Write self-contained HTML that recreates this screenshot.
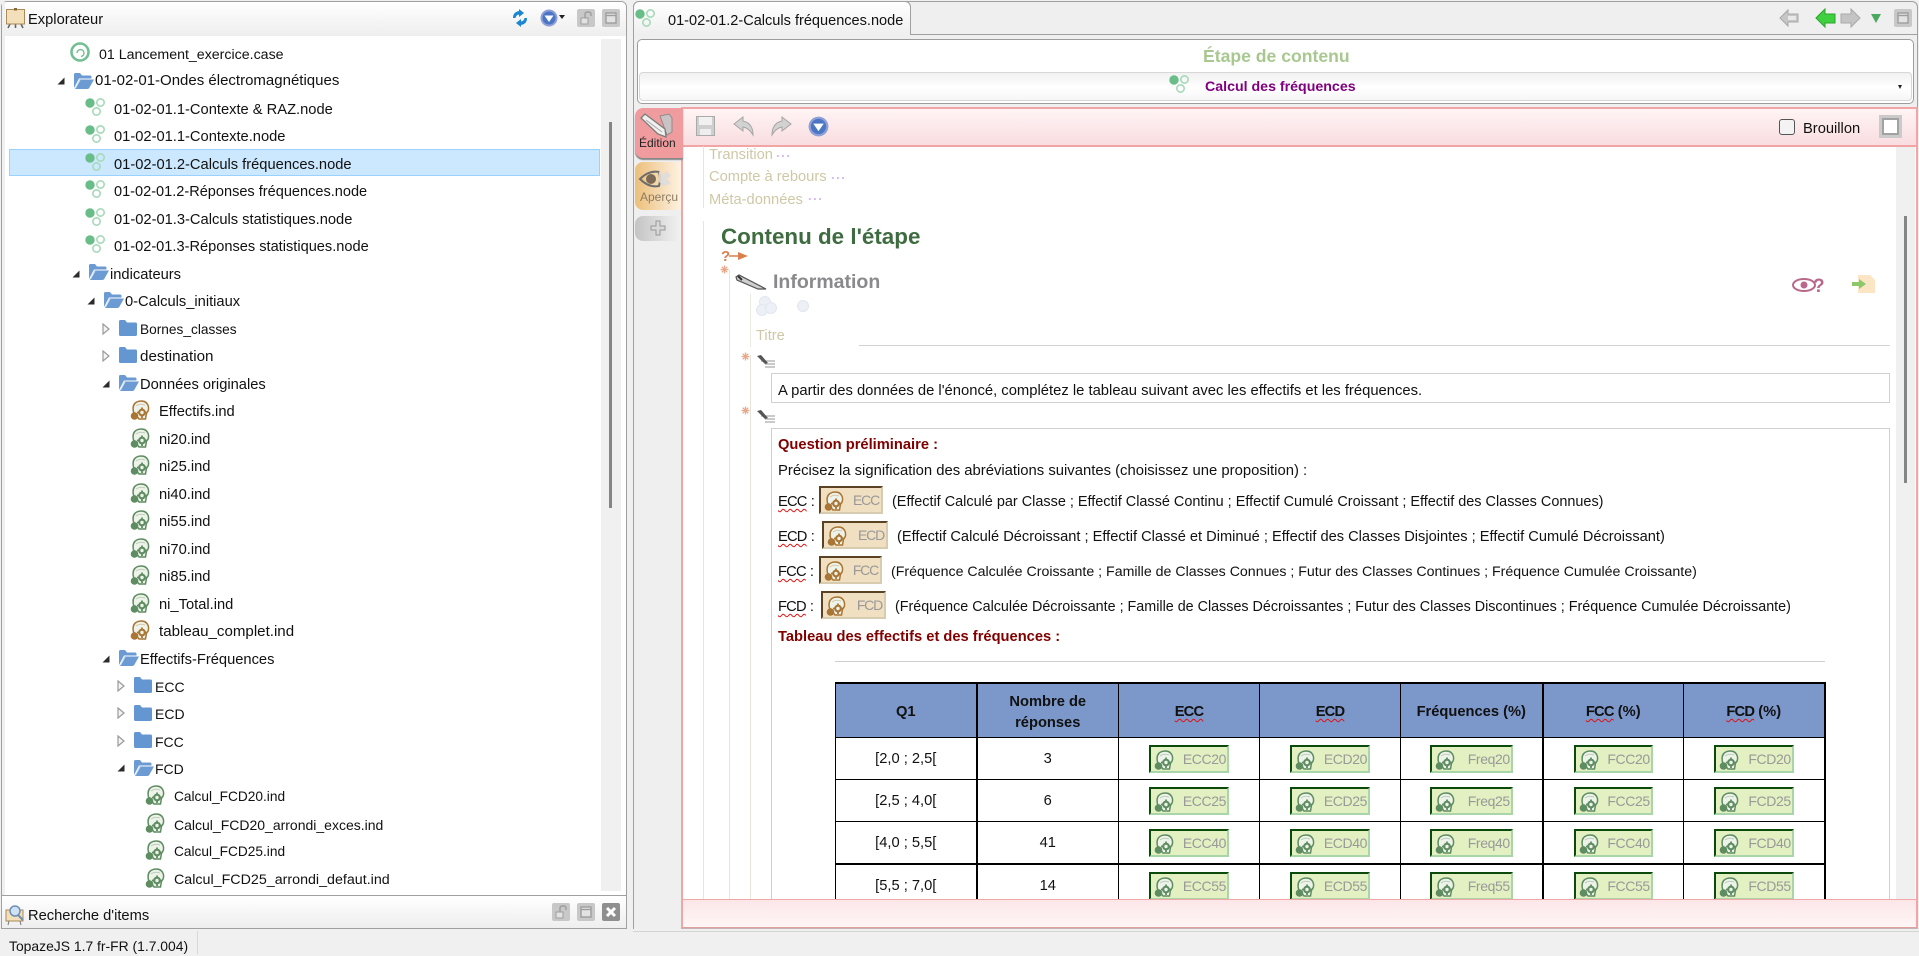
<!DOCTYPE html>
<html lang="fr"><head><meta charset="utf-8"><title>TopazeJS</title>
<style>
html,body{margin:0;padding:0;width:1919px;height:954px;overflow:hidden;background:#f0f0f0;font-family:"Liberation Sans",sans-serif;font-size:14.7px;color:#111}
div,span,svg{box-sizing:border-box}
.a{position:absolute}
.t{position:absolute;white-space:nowrap;line-height:20px;height:20px;margin-top:1px}
svg.i{position:absolute;overflow:visible}
.g{color:#cfc8a6}
.dt{font-size:13px;letter-spacing:1.5px;color:#d4b8f0;font-weight:bold}
.w{text-decoration:underline wavy #e01010 1px;text-underline-offset:2px;letter-spacing:-.8px}
.q{position:absolute;height:28px;background:#f0dfc0;border-style:solid;border-width:2px;border-color:#5a4222 #d8ccb0 #d8ccb0 #5a4222;color:#999;line-height:24px;text-align:right;padding-right:2px;font-size:14px;letter-spacing:-1.2px}
.q svg{position:absolute;left:3px;top:2px;color:#a97635}
table{position:absolute;left:835px;top:682px;border-collapse:collapse;table-layout:fixed;width:989px}
th,td{padding:0;text-align:center;border:1px solid #000;font-size:14.7px;color:#111;position:relative}
th{background:#7c97c9;height:49px;font-weight:bold;line-height:21px;border-top:2px solid #000;padding-top:4px}
td{height:41px}
.k{border-right:2px solid #000}
.v{display:inline-block;position:relative;height:28px;background:#e2f0c2;border-style:solid;border-width:2px;border-color:#0b4a0b #a9d6a9 #a9d6a9 #0b4a0b;color:#999;line-height:24px;text-align:right;padding-right:1px;vertical-align:middle;top:0;font-size:14px;letter-spacing:-.4px}
.v svg{position:absolute;left:3px;top:2px;color:#5f8d62}
</style></head><body>
<svg width="0" height="0" style="position:absolute">
<defs>
<symbol id="n" viewBox="0 0 22 22"><circle cx="6" cy="7" r="4.700" fill="#68bd88"/><circle cx="16.500" cy="6.500" r="3.700" fill="none" stroke="#a6dab8" stroke-width="1.600"/><circle cx="12.500" cy="15.500" r="3.700" fill="none" stroke="#a6dab8" stroke-width="1.600"/></symbol>
<symbol id="o" viewBox="0 0 21 18"><path d="M1 16V2.500Q1 1 2.500 1H7l2 2.500h8q1.500 0 1.500 1.500V6.500H6L1 16z" fill="#6b9bd2"/><path d="M2 17L6.500 7.500H21L16.500 15.500Q16 17 14 17z" fill="#6b9bd2"/><path d="M2.500 16L7 8" stroke="#cfe0f3" stroke-width="1"/></symbol>
<symbol id="c" viewBox="0 0 20 18"><path d="M1 15.500V2.500Q1 1 2.500 1H7l2 2.500h8.500Q19 3.500 19 5v10.500Q19 17 17.500 17h-15Q1 17 1 15.500z" fill="#6497d2"/></symbol>
<symbol id="h" viewBox="0 0 20 20"><path d="M3.500 12Q1.500 3 9 1.200Q17 0 18.500 7Q19 11 16.500 13L15.500 19H9z" fill="#eef3ea" stroke="currentColor" stroke-width="1.500"/><path d="M6 6q4-3 9-1" fill="none" stroke="currentColor" stroke-width="1" opacity=".35"/><circle cx="12" cy="12.500" r="2.800" fill="#eef3ea" stroke="currentColor" stroke-width="2.200"/><path d="M12 7.500v2M12 15.500v2.500M7 12.500h2M15 12.500h2.500" stroke="currentColor" stroke-width="1.800"/><circle cx="4.500" cy="16" r="3.800" fill="currentColor"/></symbol>
<symbol id="e" viewBox="0 0 8 8"><path d="M7.500 0.500V7.500H0.500z" fill="#2b2b2b"/></symbol>
<symbol id="x" viewBox="0 0 8 12"><path d="M1 1L7 6L1 11z" fill="#f4f4f4" stroke="#9a9a9a" stroke-width="1.200"/></symbol>
<symbol id="s" viewBox="0 0 18 18"><circle cx="9" cy="9" r="8.500" fill="#8e9fd6"/><circle cx="9" cy="9" r="6.500" fill="#4a76c4"/><path d="M4.500 6.500h9L9 13z" fill="#fff"/></symbol>
<symbol id="b" viewBox="0 0 18 18"><rect width="18" height="18" rx="2" fill="#c8c8c8"/><rect x="4" y="4" width="10" height="10" fill="#e2e2e2" stroke="#9e9e9e" stroke-width="1.400"/><path d="M4 6.500h10" stroke="#9e9e9e" stroke-width="1.400"/></symbol>
<symbol id="l" viewBox="0 0 18 18"><rect width="18" height="18" rx="2" fill="#c8c8c8"/><rect x="4" y="9" width="7" height="6" fill="#e2e2e2" stroke="#9e9e9e"/><path d="M8 9V5Q8 3 11 3Q14 3 14 5V7" fill="none" stroke="#9e9e9e" stroke-width="1.400"/></symbol>
<symbol id="m" viewBox="0 0 18 13"><path d="M4 6h14M8 9h10M8 12h10" stroke="#aaa" stroke-width="1.200"/><path d="M0 1L4 0L11 8L8 9z" fill="#555"/></symbol>
<symbol id="r" viewBox="0 0 9 9"><path d="M4.500 0.500V8.500M0.500 4.500H8.500M1.700 1.700L7.300 7.300M7.300 1.700L1.700 7.300" stroke="#e8a98a" stroke-width="1.300"/></symbol>
</defs></svg>

<!-- left panel -->
<div class="a" style="left:1px;top:1px;width:626px;height:928px;border:1px solid #a0a0a0;border-radius:6px 6px 0 0;background:#fff"></div>
<div class="a" style="left:2px;top:2px;width:624px;height:34px;background:linear-gradient(#fff,#eee);border-radius:5px 5px 0 0"></div>
<div class="a" style="left:2px;top:2px;width:3px;height:926px;background:#f0f0f0"></div>
<svg class="i" style="left:6px;top:8px" width="19" height="20" viewBox="0 0 19 20"><path d="M4 16L2 20M15 16L17 20M9.500 16V20" stroke="#666" stroke-width="1.600"/><rect x="0.500" y="1.500" width="18" height="14.500" fill="#f3dfb9" stroke="#a98a58"/><rect x="8" y="0" width="3" height="2.500" fill="#8a6a3a"/></svg>
<div class="t" style="left:28px;top:10px;margin-top:0">Explorateur</div>
<svg class="i" style="left:511px;top:9px" width="18" height="18" viewBox="0 0 18 18"><path d="M2 9Q2 3 8 2V0L13 4L8 8V5.500Q5 6 4.500 9z" fill="#1b86d4"/><path d="M16 9Q16 15 10 16V18L5 14L10 10V12.500Q13 12 13.500 9z" fill="#1b86d4"/></svg>
<svg class="i" style="left:540px;top:9px" width="18" height="18"><use href="#s"/></svg>
<div class="a" style="left:559px;top:15px;width:0;height:0;border:3.500px solid transparent;border-top:4px solid #222"></div>
<svg class="i" style="left:577px;top:9px" width="18" height="18"><use href="#l"/></svg>
<svg class="i" style="left:602px;top:9px" width="18" height="18"><use href="#b"/></svg>

<div class="a" style="left:601px;top:39px;width:20px;height:852px;background:#f0f0f0"></div>
<div class="a" style="left:609px;top:122px;width:3px;height:386px;background:#858585"></div>
<div class="a" style="left:9px;top:149px;width:591px;height:27px;background:#cce8ff;border:1px solid #99d1ff"></div>

<!-- tree -->
<div class="a" style="left:0;top:36px;width:600px;height:857px;overflow:hidden">
<div class="a" style="left:0;top:-36px;width:600px;height:940px">
<svg class="i" style="left:70px;top:42px" width="20" height="20" viewBox="0 0 20 20"><circle cx="10" cy="10" r="8.500" fill="none" stroke="#72bf92" stroke-width="2.600"/><path d="M7 11a3.500 3.500 0 1 1 4 3.500" fill="none" stroke="#72bf92" stroke-width="1.400"/></svg>
<div class="t" style="left:99px;top:44px;font-size:14.2px">01 Lancement_exercice.case</div>

<svg class="i" style="left:57px;top:77px" width="8" height="8"><use href="#e"/></svg>
<svg class="i" style="left:73px;top:72px" width="21" height="18"><use href="#o"/></svg>
<div class="t" style="left:95px;top:71px;font-size:15px;margin-top:0">01-02-01-Ondes électromagnétiques</div>

<svg class="i" style="left:84px;top:96px" width="22" height="22"><use href="#n"/></svg><div class="t" style="left:114px;top:99px">01-02-01.1-Contexte &amp; RAZ.node</div>
<svg class="i" style="left:84px;top:123px" width="22" height="22"><use href="#n"/></svg><div class="t" style="left:114px;top:126px">01-02-01.1-Contexte.node</div>
<svg class="i" style="left:84px;top:151px" width="22" height="22"><use href="#n"/></svg><div class="t" style="left:114px;top:154px">01-02-01.2-Calculs fréquences.node</div>
<svg class="i" style="left:84px;top:178px" width="22" height="22"><use href="#n"/></svg><div class="t" style="left:114px;top:181px;font-size:14.55px">01-02-01.2-Réponses fréquences.node</div>
<svg class="i" style="left:84px;top:206px" width="22" height="22"><use href="#n"/></svg><div class="t" style="left:114px;top:209px">01-02-01.3-Calculs statistiques.node</div>
<svg class="i" style="left:84px;top:233px" width="22" height="22"><use href="#n"/></svg><div class="t" style="left:114px;top:236px;font-size:14.6px">01-02-01.3-Réponses statistiques.node</div>

<svg class="i" style="left:72px;top:270px" width="8" height="8"><use href="#e"/></svg>
<svg class="i" style="left:88px;top:263px" width="21" height="18"><use href="#o"/></svg>
<div class="t" style="left:110px;top:264px">indicateurs</div>
<svg class="i" style="left:87px;top:297px" width="8" height="8"><use href="#e"/></svg>
<svg class="i" style="left:103px;top:291px" width="21" height="18"><use href="#o"/></svg>
<div class="t" style="left:125px;top:291px">0-Calculs_initiaux</div>

<svg class="i" style="left:102px;top:323px" width="8" height="12"><use href="#x"/></svg>
<svg class="i" style="left:118px;top:319px" width="20" height="18"><use href="#c"/></svg>
<div class="t" style="left:140px;top:319px;font-size:13.7px">Bornes_classes</div>
<svg class="i" style="left:102px;top:350px" width="8" height="12"><use href="#x"/></svg>
<svg class="i" style="left:118px;top:346px" width="20" height="18"><use href="#c"/></svg>
<div class="t" style="left:140px;top:346px;font-size:15.2px">destination</div>
<svg class="i" style="left:102px;top:380px" width="8" height="8"><use href="#e"/></svg>
<svg class="i" style="left:118px;top:374px" width="21" height="18"><use href="#o"/></svg>
<div class="t" style="left:140px;top:374px">Données originales</div>

<svg class="i" style="left:130px;top:400px;color:#a97635" width="20" height="20"><use href="#h"/></svg><div class="t" style="left:159px;top:401px">Effectifs.ind</div>
<svg class="i" style="left:130px;top:428px;color:#5f8d62" width="20" height="20"><use href="#h"/></svg><div class="t" style="left:159px;top:429px">ni20.ind</div>
<svg class="i" style="left:130px;top:455px;color:#5f8d62" width="20" height="20"><use href="#h"/></svg><div class="t" style="left:159px;top:456px">ni25.ind</div>
<svg class="i" style="left:130px;top:483px;color:#5f8d62" width="20" height="20"><use href="#h"/></svg><div class="t" style="left:159px;top:484px">ni40.ind</div>
<svg class="i" style="left:130px;top:510px;color:#5f8d62" width="20" height="20"><use href="#h"/></svg><div class="t" style="left:159px;top:511px">ni55.ind</div>
<svg class="i" style="left:130px;top:538px;color:#5f8d62" width="20" height="20"><use href="#h"/></svg><div class="t" style="left:159px;top:539px">ni70.ind</div>
<svg class="i" style="left:130px;top:565px;color:#5f8d62" width="20" height="20"><use href="#h"/></svg><div class="t" style="left:159px;top:566px">ni85.ind</div>
<svg class="i" style="left:130px;top:593px;color:#5f8d62" width="20" height="20"><use href="#h"/></svg><div class="t" style="left:159px;top:594px">ni_Total.ind</div>
<svg class="i" style="left:130px;top:620px;color:#a97635" width="20" height="20"><use href="#h"/></svg><div class="t" style="left:159px;top:621px;font-size:15.1px">tableau_complet.ind</div>

<svg class="i" style="left:102px;top:655px" width="8" height="8"><use href="#e"/></svg>
<svg class="i" style="left:118px;top:649px" width="21" height="18"><use href="#o"/></svg>
<div class="t" style="left:140px;top:649px">Effectifs-Fréquences</div>
<svg class="i" style="left:117px;top:680px" width="8" height="12"><use href="#x"/></svg>
<svg class="i" style="left:133px;top:676px" width="20" height="18"><use href="#c"/></svg>
<div class="t" style="left:155px;top:676px;font-size:14px">ECC</div>
<svg class="i" style="left:117px;top:707px" width="8" height="12"><use href="#x"/></svg>
<svg class="i" style="left:133px;top:704px" width="20" height="18"><use href="#c"/></svg>
<div class="t" style="left:155px;top:703px;font-size:14px">ECD</div>
<svg class="i" style="left:117px;top:735px" width="8" height="12"><use href="#x"/></svg>
<svg class="i" style="left:133px;top:731px" width="20" height="18"><use href="#c"/></svg>
<div class="t" style="left:155px;top:731px;font-size:14px">FCC</div>
<svg class="i" style="left:117px;top:764px" width="8" height="8"><use href="#e"/></svg>
<svg class="i" style="left:133px;top:759px" width="21" height="18"><use href="#o"/></svg>
<div class="t" style="left:155px;top:758px;font-size:14px">FCD</div>

<svg class="i" style="left:145px;top:785px;color:#5f8d62" width="20" height="20"><use href="#h"/></svg><div class="t" style="left:174px;top:786px;font-size:13.7px">Calcul_FCD20.ind</div>
<svg class="i" style="left:145px;top:813px;color:#5f8d62" width="20" height="20"><use href="#h"/></svg><div class="t" style="left:174px;top:814px;font-size:14px">Calcul_FCD20_arrondi_exces.ind</div>
<svg class="i" style="left:145px;top:840px;color:#5f8d62" width="20" height="20"><use href="#h"/></svg><div class="t" style="left:174px;top:841px;font-size:13.7px">Calcul_FCD25.ind</div>
<svg class="i" style="left:145px;top:868px;color:#5f8d62" width="20" height="20"><use href="#h"/></svg><div class="t" style="left:174px;top:869px;font-size:14.27px">Calcul_FCD25_arrondi_defaut.ind</div>
</div></div>

<!-- search -->
<div class="a" style="left:2px;top:895px;width:624px;height:33px;background:linear-gradient(#fff,#eee);border-top:1px solid #a0a0a0"></div>
<svg class="i" style="left:5px;top:905px" width="20" height="20" viewBox="0 0 20 20"><rect x="1" y="5" width="17" height="11" fill="#f3dfb9" stroke="#a98a58"/><circle cx="10" cy="6" r="5" fill="#cfe2f5" stroke="#6d8fb5" stroke-width="1.500"/><path d="M13 10L18 15" stroke="#6d8fb5" stroke-width="2"/><path d="M4 16l-1 4M15 16l1 4" stroke="#777"/></svg>
<div class="t" style="left:28px;top:905px">Recherche d'items</div>
<svg class="i" style="left:552px;top:903px" width="18" height="18"><use href="#l"/></svg>
<svg class="i" style="left:577px;top:903px" width="18" height="18"><use href="#b"/></svg>
<svg class="i" style="left:602px;top:903px" width="18" height="18" viewBox="0 0 18 18"><rect width="18" height="18" rx="2" fill="#8f8f8f"/><path d="M5 5L13 13M13 5L5 13" stroke="#fff" stroke-width="3"/></svg>

<!-- status -->
<div class="a" style="left:0;top:930px;width:1919px;height:24px;background:#f0f0f0"></div>
<div class="a" style="left:197px;top:931px;width:1px;height:23px;background:#d8d8d8"></div>
<div class="t" style="left:9px;top:936px;font-size:13.9px;margin-top:0">TopazeJS 1.7 fr-FR (1.7.004)</div>

<!-- right panel -->
<div class="a" style="left:633px;top:1px;width:1285px;height:928px;border:1px solid #a0a0a0;border-bottom:0;border-radius:6px 6px 0 0;background:#efefef"></div>
<div class="a" style="left:634px;top:34px;width:1283px;height:1px;background:#a0a0a0"></div>
<div class="a" style="left:633px;top:1px;width:278px;height:34px;border:1px solid #a0a0a0;border-bottom:0;border-radius:6px 6px 0 0;background:linear-gradient(#fff,#efefef)"></div>
<svg class="i" style="left:634px;top:7px" width="22" height="22"><use href="#n"/></svg>
<div class="t" style="left:668px;top:10px;font-size:14.55px">01-02-01.2-Calculs fréquences.node</div>

<svg class="i" style="left:1779px;top:8px" width="20" height="20" viewBox="0 0 20 20"><path d="M1 10L9 2V6H19V14H9V18z" fill="#c6c6c6" stroke="#a8a8a8"/><path d="M9 8h8v4H9z" fill="#e8e8e8"/></svg>
<svg class="i" style="left:1815px;top:8px" width="20" height="20" viewBox="0 0 20 20"><path d="M1 10L10 1V6H20V15H10V19z" fill="#3fd03f" stroke="#2aa52a"/></svg>
<svg class="i" style="left:1841px;top:8px" width="20" height="20" viewBox="0 0 20 20"><path d="M19 10L10 1V6H0V15H10V19z" fill="#c4c4c4" stroke="#aaa"/></svg>
<div class="a" style="left:1871px;top:14px;width:10px;height:9px;background:#4aa860;clip-path:polygon(0 0,100% 0,50% 100%)"></div>
<svg class="i" style="left:1894px;top:9px" width="18" height="18"><use href="#b"/></svg>

<div class="a" style="left:637px;top:39px;width:1277px;height:65px;border:1px solid #9c9c9c;border-radius:5px;background:#fff"></div>
<div class="t" style="left:1203px;top:46px;font-size:17.6px;font-weight:bold;color:#a8c890;margin-top:0">Étape de contenu</div>
<div class="a" style="left:639px;top:72px;width:1273px;height:29px;border:1px solid #d6d6d6;border-radius:4px;background:linear-gradient(#f1f1f1,#fff 55%,#f6f6f6)"></div>
<svg class="i" style="left:1168px;top:73px" width="22" height="22"><use href="#n"/></svg>
<div class="t" style="left:1205px;top:76px;font-weight:bold;font-size:14.2px;color:#800080">Calcul des fréquences</div>
<div class="a" style="left:1898px;top:85px;width:0;height:0;border:2.500px solid transparent;border-top:4px solid #222"></div>

<!-- editor -->
<div class="a" style="left:681px;top:107px;width:1237px;height:822px;border:2px solid #f2a5a5;border-bottom:0;background:#fff"></div>
<div class="a" style="left:683px;top:109px;width:1233px;height:38px;background:linear-gradient(#fff4f4,#f9dde0);border-bottom:2px solid #f2a5a5"></div>

<div class="a" style="left:635px;top:108px;width:48px;height:50px;background:#f09c9f;border-radius:8px 0 0 8px;box-shadow:0 2px 1px #888"></div>
<svg class="i" style="left:639px;top:112px" width="34" height="26" viewBox="0 0 34 26"><path d="M21 4l9-2 3 4v14l-5 3z" fill="#c9c3c3" stroke="#8f8a8a"/><path d="M2 6L6 2L26 17L27 25L19 22z" fill="#f2efef" stroke="#7d7d7d" stroke-width="1.300"/><path d="M7 8l16 12" stroke="#aaa"/></svg>
<div class="t" style="left:639px;top:132px;font-size:12px;color:#222">Édition</div>
<div class="a" style="left:635px;top:162px;width:46px;height:48px;background:linear-gradient(90deg,#ecbf7a,#fdf2e2);border-radius:8px 0 0 8px"></div>
<svg class="i" style="left:639px;top:168px" width="34" height="20" viewBox="0 0 34 20"><path d="M1 11Q10 2 20 4Q22 11 20 18Q10 20 1 11z" fill="none" stroke="#6d6d6d" stroke-width="2"/><circle cx="12" cy="11" r="5" fill="#7b6a55"/><path d="M20 3l4 4 4-4 4 5-4 3 4 5-8 2-4-4z" fill="#ddd" opacity=".9"/></svg>
<div class="t" style="left:640px;top:186px;font-size:12px;color:#8c7c64">Aperçu</div>
<div class="a" style="left:635px;top:216px;width:46px;height:25px;background:linear-gradient(90deg,#c4c4c4,#f2f2f2);border-radius:8px 0 0 8px"></div>
<svg class="i" style="left:650px;top:220px" width="16" height="16" viewBox="0 0 16 16"><path d="M6 1h4v5h5v4h-5v5H6v-5H1V6h5z" fill="#d8d8d8" stroke="#999"/></svg>

<svg class="i" style="left:696px;top:116px" width="19" height="20" viewBox="0 0 19 20"><rect x=".5" y=".5" width="18" height="19" fill="#cfcfcf" stroke="#aaa"/><rect x="3" y="1" width="13" height="8" fill="#f1f1f1"/><rect x="4" y="13" width="11" height="6" fill="#eee"/></svg>
<svg class="i" style="left:733px;top:116px" width="21" height="20" viewBox="0 0 21 20"><path d="M1 8L10 1V5Q20 7 20 19Q16 12 10 11V15z" fill="#d2d2d2" stroke="#a5a5a5"/></svg>
<svg class="i" style="left:771px;top:116px" width="21" height="20" viewBox="0 0 21 20"><path d="M20 8L11 1V5Q1 7 1 19Q5 12 11 11V15z" fill="#d2d2d2" stroke="#a5a5a5"/></svg>
<svg class="i" style="left:808px;top:116px" width="21" height="21"><use href="#s"/></svg>

<div class="a" style="left:1779px;top:119px;width:16px;height:16px;border:1px solid #555;border-radius:3px;background:#f3f3f3"></div>
<div class="t" style="left:1803px;top:118px">Brouillon</div>
<div class="a" style="left:1879px;top:115px;width:23px;height:23px;background:#cacaca;padding:3px"><div style="width:17px;height:17px;border:2px solid #a2a2a2;background:#fff"></div></div>

<div class="a" style="left:1896px;top:147px;width:19px;height:752px;background:#f0f0f0"></div>
<div class="a" style="left:1904px;top:216px;width:3px;height:267px;background:#858585"></div>

<!-- content -->
<div class="a" style="left:703px;top:146px;width:1px;height:62px;background:#e8e4da"></div>
<div class="a" style="left:703px;top:221px;width:1px;height:678px;background:#e8e4da"></div>
<div class="t g" style="left:709px;top:144px">Transition</div><div class="t dt" style="left:776px;top:142px">...</div>
<div class="t g" style="left:709px;top:166px">Compte à rebours</div><div class="t dt" style="left:831px;top:164px">...</div>
<div class="t g" style="left:709px;top:189px">Méta-données</div><div class="t dt" style="left:808px;top:185px">...</div>
<div class="t" style="left:721px;top:225px;font-size:22.4px;font-weight:bold;color:#3e6c40;line-height:24px;height:24px;margin-top:0">Contenu de l'étape</div>
<svg class="i" style="left:721px;top:249px" width="27" height="14" viewBox="0 0 27 14"><text x="0" y="12" font-size="15" font-weight="bold" fill="#d9814d" font-family="Liberation Sans">?</text><path d="M8 7H18" stroke="#d9814d" stroke-width="1.500"/><path d="M17 3L27 7L17 11z" fill="#d9814d"/></svg>

<svg class="i" style="left:720px;top:265px" width="9" height="9"><use href="#r"/></svg>
<div class="a" style="left:729px;top:270px;width:1px;height:629px;background:#e8e4da"></div>
<svg class="i" style="left:735px;top:274px" width="32" height="16" viewBox="0 0 32 16"><path d="M1 3L4 1L31 15L23 15L2 6z" fill="#cfcfcf" stroke="#555" stroke-width="1.200"/><path d="M3 2L7 6" stroke="#333" stroke-width="2"/></svg>
<div class="t" style="left:773px;top:270px;font-size:19.5px;font-weight:bold;color:#8a8a8c;line-height:24px;height:24px;margin-top:0">Information</div>
<svg class="i" style="left:1792px;top:276px" width="32" height="18" viewBox="0 0 32 18"><ellipse cx="12" cy="9" rx="11" ry="6" fill="none" stroke="#b9688a" stroke-width="2"/><circle cx="12" cy="9" r="3.500" fill="#b9688a"/><text x="21" y="16" font-size="19" font-weight="bold" fill="#b9688a" font-family="Liberation Sans">?</text></svg>
<svg class="i" style="left:1852px;top:275px" width="24" height="20" viewBox="0 0 24 20"><path d="M6 0H18L23 5V18H6z" fill="#fbe5c5"/><path d="M0 7H7V4L14 9L7 14V11H0z" fill="#8cc86a"/></svg>

<div class="a" style="left:750px;top:294px;width:1px;height:53px;background:#ece9e0"></div>
<div class="a" style="left:750px;top:355px;width:1px;height:544px;background:#e8e4da"></div>
<svg class="i" style="left:757px;top:296px" width="52" height="20" viewBox="0 0 52 20"><circle cx="8" cy="6" r="5.500" fill="#edf1f7" stroke="#e2e6ee"/><circle cx="5" cy="14" r="5.500" fill="#edf1f7" stroke="#e2e6ee"/><circle cx="14" cy="12" r="5.500" fill="#edf1f7" stroke="#e2e6ee"/><circle cx="46" cy="10" r="5.500" fill="#edf1f7" stroke="#e2e6ee"/></svg>
<div class="t g" style="left:756px;top:325px">Titre</div>
<div class="a" style="left:859px;top:345px;width:1031px;height:1px;background:#d2d2d2"></div>

<svg class="i" style="left:741px;top:352px" width="9" height="9"><use href="#r"/></svg>
<svg class="i" style="left:757px;top:355px" width="18" height="13"><use href="#m"/></svg>
<div class="a" style="left:771px;top:373px;width:1119px;height:30px;border:1px solid #d0d0d0"></div>
<div class="t" style="left:778px;top:380px;font-size:14.8px">A partir des données de l'énoncé, complétez le tableau suivant avec les effectifs et les fréquences.</div>
<svg class="i" style="left:741px;top:406px" width="9" height="9"><use href="#r"/></svg>
<svg class="i" style="left:757px;top:410px" width="18" height="13"><use href="#m"/></svg>
<div class="a" style="left:771px;top:428px;width:1119px;height:480px;border:1px solid #d0d0d0"></div>
<div class="t" style="left:778px;top:434px;font-weight:bold;color:#800000">Question préliminaire :</div>
<div class="t" style="left:778px;top:460px;font-size:14.84px">Précisez la signification des abréviations suivantes (choisissez une proposition) :</div>

<div class="t" style="left:778px;top:491px"><span class="w">ECC</span> :</div>
<div class="q" style="left:819px;top:486px;width:64px"><svg width="20" height="22"><use href="#h"/></svg>ECC</div>
<div class="t" style="left:892px;top:491px;font-size:14.45px">(Effectif Calculé par Classe ; Effectif Classé Continu ; Effectif Cumulé Croissant ; Effectif des Classes Connues)</div>

<div class="t" style="left:778px;top:526px"><span class="w">ECD</span> :</div>
<div class="q" style="left:822px;top:521px;width:66px"><svg width="20" height="22"><use href="#h"/></svg>ECD</div>
<div class="t" style="left:897px;top:526px;font-size:14.63px">(Effectif Calculé Décroissant ; Effectif Classé et Diminué ; Effectif des Classes Disjointes ; Effectif Cumulé Décroissant)</div>

<div class="t" style="left:778px;top:561px"><span class="w">FCC</span> :</div>
<div class="q" style="left:819px;top:556px;width:63px"><svg width="20" height="22"><use href="#h"/></svg>FCC</div>
<div class="t" style="left:891px;top:561px;font-size:14.18px">(Fréquence Calculée Croissante ; Famille de Classes Connues ; Futur des Classes Continues ; Fréquence Cumulée Croissante)</div>

<div class="t" style="left:778px;top:596px"><span class="w">FCD</span> :</div>
<div class="q" style="left:821px;top:591px;width:65px"><svg width="20" height="22"><use href="#h"/></svg>FCD</div>
<div class="t" style="left:895px;top:596px;font-size:14.33px">(Fréquence Calculée Décroissante ; Famille de Classes Décroissantes ; Futur des Classes Discontinues ; Fréquence Cumulée Décroissante)</div>

<div class="t" style="left:778px;top:626px;font-weight:bold;color:#800000">Tableau des effectifs et des fréquences :</div>
<div class="a" style="left:835px;top:661px;width:990px;height:1px;background:#cfcfcf"></div>

<!-- table -->
<div class="a" style="left:0;top:0;width:1919px;height:899px;overflow:hidden;pointer-events:none">
<table>
<colgroup><col style="width:141px"><col style="width:142px"><col style="width:141px"><col style="width:141px"><col style="width:142px"><col style="width:141px"><col style="width:141px"></colgroup>
<tr><th class="k">Q1</th><th>Nombre de<br>réponses</th><th><span class="w">ECC</span></th><th><span class="w">ECD</span></th><th class="k">Fréquences (%)</th><th><span class="w">FCC</span> (%)</th><th class="k"><span class="w">FCD</span> (%)</th></tr>
<tr><td class="k">[2,0 ; 2,5[</td><td>3</td><td><span class="v" style="width:80px"><svg width="20" height="22"><use href="#h"/></svg>ECC20</span></td><td><span class="v" style="width:80px"><svg width="20" height="22"><use href="#h"/></svg>ECD20</span></td><td class="k"><span class="v" style="width:83px"><svg width="20" height="22"><use href="#h"/></svg>Freq20</span></td><td><span class="v" style="width:79px"><svg width="20" height="22"><use href="#h"/></svg>FCC20</span></td><td class="k"><span class="v" style="width:80px"><svg width="20" height="22"><use href="#h"/></svg>FCD20</span></td></tr>
<tr><td class="k">[2,5 ; 4,0[</td><td>6</td><td><span class="v" style="width:80px"><svg width="20" height="22"><use href="#h"/></svg>ECC25</span></td><td><span class="v" style="width:80px"><svg width="20" height="22"><use href="#h"/></svg>ECD25</span></td><td class="k"><span class="v" style="width:83px"><svg width="20" height="22"><use href="#h"/></svg>Freq25</span></td><td><span class="v" style="width:79px"><svg width="20" height="22"><use href="#h"/></svg>FCC25</span></td><td class="k"><span class="v" style="width:80px"><svg width="20" height="22"><use href="#h"/></svg>FCD25</span></td></tr>
<tr><td class="k" style="border-bottom:2px solid #000">[4,0 ; 5,5[</td><td style="border-bottom:2px solid #000">41</td><td style="border-bottom:2px solid #000"><span class="v" style="width:80px"><svg width="20" height="22"><use href="#h"/></svg>ECC40</span></td><td style="border-bottom:2px solid #000"><span class="v" style="width:80px"><svg width="20" height="22"><use href="#h"/></svg>ECD40</span></td><td class="k" style="border-bottom:2px solid #000"><span class="v" style="width:83px"><svg width="20" height="22"><use href="#h"/></svg>Freq40</span></td><td style="border-bottom:2px solid #000"><span class="v" style="width:79px"><svg width="20" height="22"><use href="#h"/></svg>FCC40</span></td><td class="k" style="border-bottom:2px solid #000"><span class="v" style="width:80px"><svg width="20" height="22"><use href="#h"/></svg>FCD40</span></td></tr>
<tr><td class="k">[5,5 ; 7,0[</td><td>14</td><td><span class="v" style="width:80px"><svg width="20" height="22"><use href="#h"/></svg>ECC55</span></td><td><span class="v" style="width:80px"><svg width="20" height="22"><use href="#h"/></svg>ECD55</span></td><td class="k"><span class="v" style="width:83px"><svg width="20" height="22"><use href="#h"/></svg>Freq55</span></td><td><span class="v" style="width:79px"><svg width="20" height="22"><use href="#h"/></svg>FCC55</span></td><td class="k"><span class="v" style="width:80px"><svg width="20" height="22"><use href="#h"/></svg>FCD55</span></td></tr>
</table>
</div>

<!-- bottom bar of editor -->
<div class="a" style="left:681px;top:899px;width:1237px;height:29px;background:linear-gradient(#fbe6e8,#fff6f6);border:2px solid #f2a5a5;border-top:1px solid #f2a5a5;border-bottom:1px solid #e0a0a0"></div>
<div class="a" style="left:681px;top:928px;width:1237px;height:1px;background:#c4b4b4"></div>
<div class="a" style="left:633px;top:931px;width:1286px;height:1px;background:#d4d4d4"></div>
</body></html>
